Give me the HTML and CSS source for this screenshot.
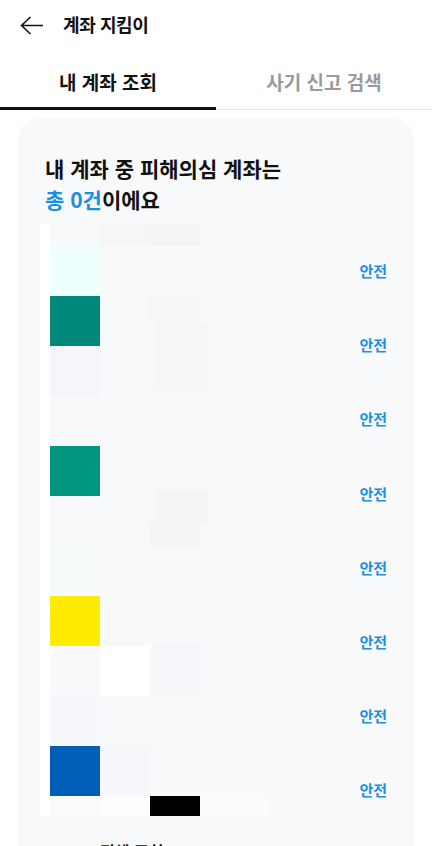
FILE: index.html
```html
<!DOCTYPE html>
<html lang="ko">
  <head>
    <meta charset="UTF-8" />
    <meta name="viewport" content="width=device-width, initial-scale=1.0" />
    <title>계좌 지킴이</title>
    <link rel="stylesheet" href="styles.css">
  </head>
  <body>
    <div class="fullContainer">
      <div class="topBar">
        <svg class="backIcon" width="24" height="20" viewBox="0 0 24 20">
          <path d="M23 9.5H1.5M10.5 1L1.5 9.5L10.5 18" fill="none" stroke="#111" stroke-width="1.6" />
        </svg>
        <h1>계좌 지킴이</h1>
      </div>
      <div class="tabs">
        <div class="tab active">내 계좌 조회</div>
        <div class="tab">사기 신고 검색</div>
      </div>
      <div class="card">
        <h2>내 계좌 중 피해의심 계좌는<br /><span class="blue">총 0건</span>이에요</h2>
        <div class="accountList">
          <!-- blurred out bank logos and names -->
          <div class="mosaic">
            <i class="m1"></i><i class="m2"></i><i class="m3"></i><i class="m4"></i>
            <i class="m5"></i><i class="m6"></i><i class="m7"></i><i class="m8"></i>
            <i class="m9"></i><i class="m10"></i><i class="m11"></i><i class="m12"></i>
            <i class="m13"></i><i class="m14"></i><i class="m15"></i><i class="m16"></i>
            <i class="m17"></i><i class="m18"></i><i class="m19"></i><i class="m20"></i>
            <i class="m21"></i><i class="m22"></i><i class="m23"></i><i class="m24"></i>
            <i class="m25"></i><i class="m26"></i><i class="m27"></i><i class="m28"></i>
          </div>
          <div class="accountRow">안전</div>
          <div class="accountRow">안전</div>
          <div class="accountRow">안전</div>
          <div class="accountRow">안전</div>
          <div class="accountRow">안전</div>
          <div class="accountRow">안전</div>
          <div class="accountRow">안전</div>
          <div class="accountRow">안전</div>
        </div>
        <div class="moreText">전체 조회</div>
      </div>
    </div>
  </body>
</html>
```

FILE: styles.css
```css
* {
  padding: 0;
  margin: 0;
  box-sizing: border-box;
}
html,
body {
  height: 100%;
  overflow: hidden;
  background: #fff;
}
.fullContainer {
  width: 432px;
  height: 846px;
  overflow: hidden;
  font-family: "Noto Sans CJK KR", "Noto Sans", sans-serif;
  color: #111;
}
.topBar {
  height: 52px;
  display: flex;
  align-items: center;
  padding-left: 20px;
}
.backIcon {
  margin-right: 19px;
}
.topBar h1 {
  font-size: 18px;
  font-weight: 700;
  letter-spacing: -0.4px;
  margin-bottom: 5px;
}
.tabs {
  display: flex;
  height: 58px;
  border-bottom: 1px solid #e8e8e8;
}
.tab {
  width: 50%;
  height: 58px;
  display: flex;
  align-items: center;
  justify-content: center;
  font-size: 19px;
  font-weight: 700;
  color: #9a9a9a;
  padding-top: 1px;
}
.tab.active {
  color: #111;
  padding-top: 4px;
  border-bottom: 3px solid #111;
}
.card {
  margin: 8px 18px 0 18px;
  height: 760px;
  padding: 35px 0 0 27px;
  background: #f8f9fb;
  border-radius: 22px;
}
.card h2 {
  font-size: 21px;
  font-weight: 700;
  line-height: 31px;
}
.blue {
  color: #1a90e4;
}
.accountList {
  position: relative;
  margin-top: 9px;
  margin-left: -5px;
  padding-top: 10px;
}
.accountRow {
  height: 74.2px;
  display: flex;
  align-items: center;
  justify-content: flex-end;
  padding-right: 27px;
  padding-bottom: 1px;
  font-size: 15px;
  font-weight: 700;
  color: #1a90e4;
}
.mosaic {
  position: absolute;
  left: 0;
  top: 0;
  width: 240px;
  height: 592px;
  border-left: 10px solid #fff;
}
.mosaic > * {
  position: absolute;
  display: block;
  width: 50px;
  height: 50px;
}
.m1 { left: 50px; top: 0; height: 22px; background: #f5f6f7; }
.m2 { left: 100px; top: 0; height: 22px; background: #f3f4f6; }
.m3 { left: 0; top: 22px; background: #effffe; }
.m4 { left: 50px; top: 22px; background: #f8f9fb; }
.m5 { left: 100px; top: 22px; width: 100px; background: #f9fafc; }
.m6 { left: 0; top: 72px; background: #00897b; }
.m7 { left: 100px; top: 72px; height: 27px; background: #f5f6f8; }
.m8 { left: 106px; top: 99px; width: 52px; height: 15px; background: #f5f6f8; }
.m9 { left: 106px; top: 114px; width: 52px; height: 52px; background: #f6f8f8; }
.m10 { left: 0; top: 122px; background: #f5f5fb; }
.m11 { left: 50px; top: 122px; height: 50px; background: #fafafc; }
.m12 { left: 0; top: 222px; background: #00957d; }
.m13 { left: 106px; top: 266px; width: 52px; height: 32px; background: #f4f5f7; }
.m14 { left: 100px; top: 298px; height: 24px; background: #f4f5f7; }
.m15 { left: 0; top: 322px; background: #f7fafb; }
.m16 { left: 0; top: 372px; background: #ffeb00; }
.m17 { left: 0; top: 422px; background: #f9fafc; }
.m18 { left: 50px; top: 422px; background: #fff; }
.m19 { left: 100px; top: 422px; background: #f5f6fa; }
.m20 { left: 0; top: 472px; background: #f6f8fd; }
.m21 { left: 0; top: 522px; background: #005eb8; }
.m22 { left: 100px; top: 572px; height: 20px; background: #000; }
.m23 { left: 50px; top: 472px; width: 100px; background: #f8f9f9; }
.m24 { left: 50px; top: 522px; background: #f5f7fb; }
.m25 { left: 100px; top: 522px; width: 100px; background: #f9fafc; }
.m26 { left: 0; top: 572px; height: 20px; background: #fbfbfb; }
.m27 { left: 50px; top: 572px; height: 20px; background: #fdfdfd; }
.m28 { left: 150px; top: 572px; width: 68px; height: 20px; background: #fbfbfc; }
.moreText {
  margin-top: 11px;
  padding-left: 55px;
  font-size: 16px;
  font-weight: 700;
}
```
